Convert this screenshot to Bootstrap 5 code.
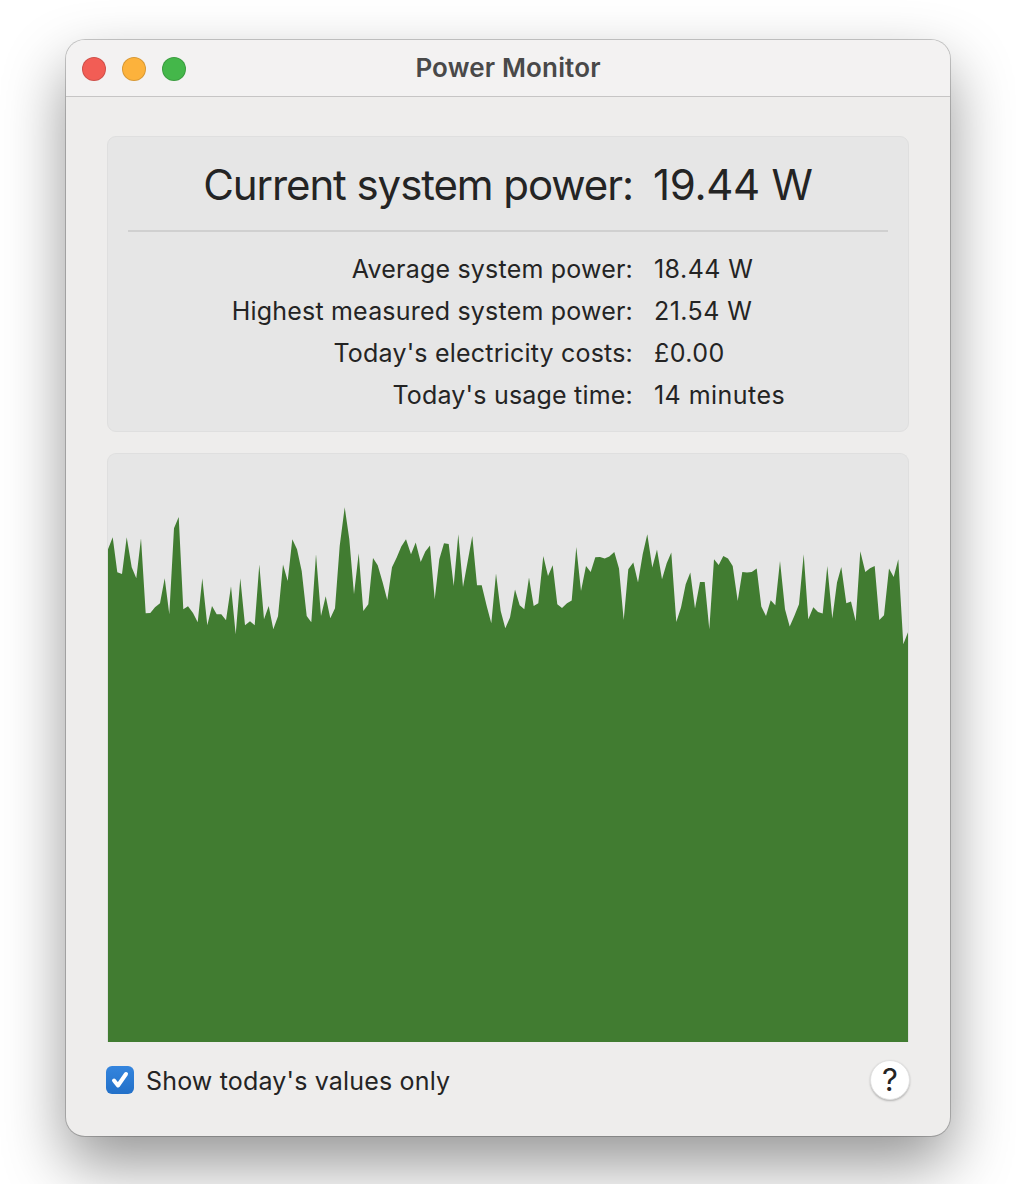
<!DOCTYPE html>
<html lang="en">
<head>
    <meta charset="UTF-8">
    <meta name="viewport" content="width=device-width, initial-scale=1.0">
    <title>Power Monitor</title>
    <link href="https://cdn.jsdelivr.net/npm/bootstrap@5.3.0/dist/css/bootstrap.min.css" rel="stylesheet">
    <style>
        html, body {
            height: 100%;
        }
        body {
            background-color: #ffffff;
            color: #242424;
            font-family: Inter, "Liberation Sans", sans-serif;
            overflow: hidden;
        }
        .desk {
            padding: 40px 66px 48px 66px;
        }
        .mac-window {
            height: 1096px;
            background-color: #eeedec;
            border-radius: 19px;
            box-shadow: 0 0 0 1px rgba(0, 0, 0, .2), 0 28px 62px rgba(0, 0, 0, .42);
        }
        .title-bar {
            height: 57px;
            background-color: #f3f2f2;
            border-bottom: 1px solid #c6c5c5;
            border-radius: 19px 19px 0 0;
            padding: 0 16px;
        }
        .traffic {
            width: 24px;
            height: 24px;
            border-radius: 50%;
            border: 1px solid rgba(0, 0, 0, .14);
        }
        .traffic-red { background-color: #f25d55; }
        .traffic-yellow { background-color: #fcb23c; }
        .traffic-green { background-color: #44b74a; }
        .traffic-group {
            gap: 16px;
            margin-top: 1px;
        }
        .title-text {
            font-size: 26px;
            font-weight: 600;
            color: #494949;
            letter-spacing: .15px;
            margin-top: -1px;
        }
        .window-body {
            padding: 39px 41px 0 41px;
        }
        .stats-panel {
            height: 296px;
            background-color: #e6e6e6;
            border: 1px solid #dfdfdf;
            border-radius: 9px;
            padding: 0 20px;
        }
        .headline {
            height: 95px;
            font-size: 42px;
            padding-top: 2px;
            border-bottom: 2px solid #d0d0d0;
        }
        .headline .stat-label {
            letter-spacing: -1.08px;
        }
        .headline .stat-value {
            letter-spacing: -.3px;
            padding-left: 20px;
        }
        .stat-label {
            width: 505px;
            flex: none;
            text-align: right;
            letter-spacing: .2px;
        }
        .stat-value {
            padding-left: 21px;
            letter-spacing: .45px;
        }
        .stat-rows {
            padding-top: 17px;
        }
        .stat-row {
            height: 42px;
            font-size: 25px;
        }
        .chart-panel {
            height: 589px;
            margin-top: 21px;
            background-color: #e6e6e6;
            border: 1px solid #dfdfdf;
            border-bottom: 0;
            border-radius: 9px 9px 0 0;
            overflow: hidden;
        }
        .chart-panel svg {
            display: block;
        }
        .foot-bar {
            height: 76px;
        }
        .show-check {
            font-size: 25px;
            letter-spacing: .17px;
        }
        .show-check .form-check-label {
            padding-top: 4px;
        }
        .show-check .form-check-input:checked[type=checkbox] {
            width: 28px;
            height: 28px;
            margin: 0 12px 0 -1px;
            float: none;
            border: 0;
            border-radius: 6px;
            background-color: #2b77d0;
            background-size: 100% 100%;
            background-image: url("data:image/svg+xml,%3csvg xmlns='http://www.w3.org/2000/svg' viewBox='0 0 28 28'%3e%3cpath fill='none' stroke='%23fff' stroke-linecap='round' stroke-linejoin='round' stroke-width='4' d='M8 14.5l4 5 8-11.5'/%3e%3c/svg%3e"), linear-gradient(#3485de, #2270c8);
        }
        .help-btn {
            width: 40px;
            height: 40px;
            padding: 0;
            margin-right: -1px;
            background-color: #ffffff;
            color: #242424;
            font-size: 31px;
            font-weight: 400;
            line-height: 38px;
            border: 1px solid #e2e2e2;
            box-shadow: 0 1px 2px rgba(0, 0, 0, .25);
        }
    </style>
</head>
<body>
    <div class="desk">
        <div class="mac-window">
            <div class="title-bar d-flex align-items-center position-relative">
                <div class="traffic-group d-flex">
                    <div class="traffic traffic-red"></div>
                    <div class="traffic traffic-yellow"></div>
                    <div class="traffic traffic-green"></div>
                </div>
                <div class="title-text position-absolute top-50 start-50 translate-middle">Power Monitor</div>
            </div>
            <div class="window-body">
                <div class="stats-panel">
                    <div class="headline d-flex align-items-center">
                        <div class="stat-label">Current system power:</div>
                        <div class="stat-value">19.44 W</div>
                    </div>
                    <div class="stat-rows">
                        <div class="stat-row d-flex align-items-center">
                            <div class="stat-label">Average system power:</div>
                            <div class="stat-value">18.44 W</div>
                        </div>
                        <div class="stat-row d-flex align-items-center">
                            <div class="stat-label">Highest measured system power:</div>
                            <div class="stat-value">21.54 W</div>
                        </div>
                        <div class="stat-row d-flex align-items-center">
                            <div class="stat-label">Today's electricity costs:</div>
                            <div class="stat-value">£0.00</div>
                        </div>
                        <div class="stat-row d-flex align-items-center">
                            <div class="stat-label">Today's usage time:</div>
                            <div class="stat-value">14 minutes</div>
                        </div>
                    </div>
                </div>
                <div class="chart-panel">
                    <svg width="800" height="588" viewBox="108 454.7 800 588">
                        <polygon fill="#417c31" points="108,1045 108,550 112.7,538 117.3,573 122,574.7 126.7,538 131.7,568 136.3,579 141,539 145.7,614 150.3,613.7 155,608 160,604 164.7,579 169.3,615 174,529 178.7,517.7 183.3,610 188,607 193,613.7 197.7,623 202.3,579 207.3,626 212,606.7 216.7,615 221.3,615 226,621 231,587 235.7,635 240.3,579 245,626 250,622 254.7,626 259.3,565.3 264,620 268.7,606.7 273.3,630 278,617 283,565.3 287.7,581.7 292.3,540 297,550 301.7,571.7 306.7,616.7 311.3,623 316,555 321,616.7 325.7,597 330.3,619 335,609 339.7,546.7 344.7,508 349.3,540 354,595 358.7,554 363.3,611.7 368.3,605 373,558.7 377.7,566 382.7,583.3 387.3,600.7 392,568 396.7,558.3 401.3,547.3 406,540 411,555 415.7,543.3 420.7,562.7 425.3,552.3 430,546.3 434.7,600 439.3,560 444,544 448.7,544.7 453.7,586.7 458.3,535 463,587.7 467.7,562 472.3,536.7 477,586 481.7,586 486.7,606.7 491.3,624 496,574.3 500.7,611.7 505.3,629 510,618.3 515,590.3 519.7,606 524.3,610 529,578.3 533.7,606.7 538.3,604 543.3,556.7 548,576.7 552.7,566 557.3,605 562,608.7 567,604 571.7,601.3 576.3,547.7 581,591.7 586,566.7 590.7,572.7 595.3,558 600,557.7 604.7,559.3 609.3,557.3 614.3,552.7 619,569.3 623.7,620.7 628.3,570 633.3,563.3 638,583.3 642.7,555 647.3,535 652.3,568.3 657,550.3 662,580 666.7,564 671.3,553.3 676.3,622.7 681,608.3 685.7,585 690.3,573.3 695,609.3 700,582.7 704.7,582.7 709.3,630 714,560 718.7,565.7 723.3,556.7 728,559.3 732.7,566.7 737.7,601.7 742.3,572.7 747,573.3 751.7,572.7 756.7,569.3 761.3,607.3 766,616.7 770.7,601 775.3,606 780,561.7 785,610 789.7,627.3 794.3,616.7 799,605 803.7,555 808.3,620 813.3,608 818,612.7 822.7,614.3 827.3,566.7 832.3,619.3 837,583.3 841.3,567.7 846.3,604 851,602.3 855.7,622 860.3,552 865.3,572.7 870,569 874.7,566.7 879.3,620.7 884,616 889,569.3 893.7,577.7 898.3,560 903.3,645 908,633 908,1045"/>
                    </svg>
                </div>
                <div class="foot-bar d-flex align-items-center justify-content-between">
                    <div class="show-check form-check d-flex align-items-center p-0 m-0">
                        <input class="form-check-input" type="checkbox" id="soloHoy" checked>
                        <label class="form-check-label" for="soloHoy">Show today's values only</label>
                    </div>
                    <button type="button" class="help-btn btn rounded-circle">?</button>
                </div>
            </div>
        </div>
    </div>
    <script src="https://cdn.jsdelivr.net/npm/bootstrap@5.3.0/dist/js/bootstrap.bundle.min.js"></script>
</body>
</html>
